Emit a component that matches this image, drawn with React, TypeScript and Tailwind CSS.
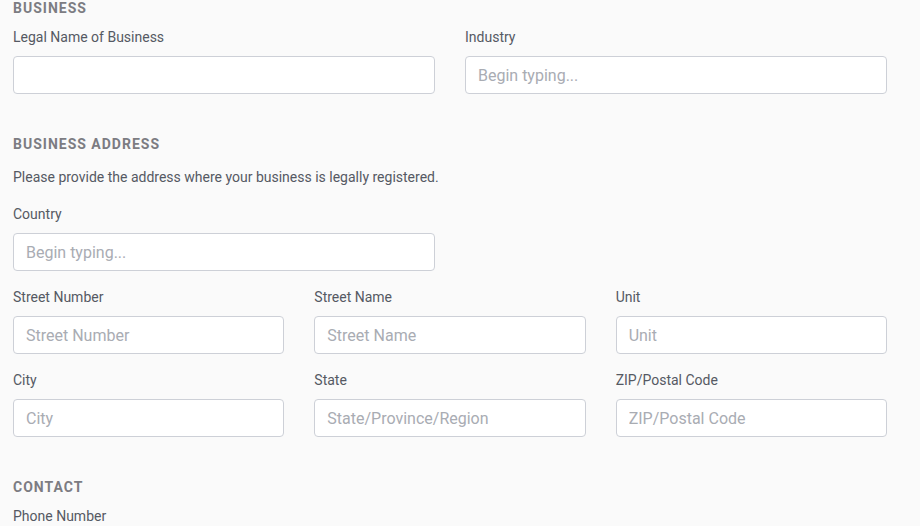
const font = { fontFamily: 'Roboto, "Liberation Sans", sans-serif' };

function Field({ label, placeholder = '' }: { label: string; placeholder?: string }) {
  return (
    <div className="flex flex-col">
      <label className="text-[14px] leading-[20px] text-[#555963] mb-[9px]">{label}</label>
      <input
        placeholder={placeholder}
        className="h-[38px] w-full rounded-[4px] border border-[#cdd0d7] bg-white px-3 text-[16px] text-[#333] placeholder:text-[#a9acb3] outline-none"
      />
    </div>
  );
}

function Heading({ children, className = '' }: { children: React.ReactNode; className?: string }) {
  return (
    <h2 className={`text-[14px] leading-[16px] font-bold tracking-[1px] text-[#7c7c82] ${className}`}>
      {children}
    </h2>
  );
}

export default function App() {
  return (
    <div className="min-h-screen bg-[#fafafa] overflow-hidden" style={font}>
      <div className="w-[874px] ml-[13px]">
        <Heading className="mb-[11px]">BUSINESS</Heading>
        <div className="grid grid-cols-2 gap-x-[30px]">
          <Field label="Legal Name of Business" />
          <Field label="Industry" placeholder="Begin typing..." />
        </div>

        <Heading className="mt-[42px] mb-[15px]">BUSINESS ADDRESS</Heading>
        <p className="text-[14px] leading-[20px] text-[#555963] mb-[17px]">
          Please provide the address where your business is legally registered.
        </p>
        <div className="grid grid-cols-2 gap-x-[30px]">
          <Field label="Country" placeholder="Begin typing..." />
        </div>
        <div className="grid grid-cols-3 gap-x-[30px] gap-y-[16px] mt-[16px]">
          <Field label="Street Number" placeholder="Street Number" />
          <Field label="Street Name" placeholder="Street Name" />
          <Field label="Unit" placeholder="Unit" />
          <Field label="City" placeholder="City" />
          <Field label="State" placeholder="State/Province/Region" />
          <Field label="ZIP/Postal Code" placeholder="ZIP/Postal Code" />
        </div>

        <Heading className="mt-[42px] mb-[11px]">CONTACT</Heading>
        <Field label="Phone Number" />
      </div>
    </div>
  );
}
